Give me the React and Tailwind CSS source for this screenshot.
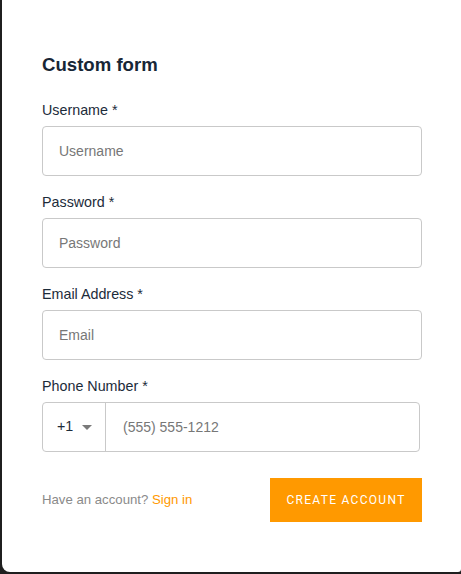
import React from "react";

function Field({ label, placeholder, type = "text" }) {
  return (
    <div className="flex flex-col">
      <label className="text-[14.3px] leading-[20px] text-[#1c2b3a]">{label}</label>
      <input
        type={type}
        placeholder={placeholder}
        className="mt-[6px] h-[50px] w-full rounded-[4px] border border-[#c9c9c9] bg-white px-[16px] text-[14px] text-[#1c2b3a] placeholder:text-[#777777] outline-none"
      />
    </div>
  );
}

export default function App() {
  return (
    <div
      className="h-[574px] w-[461px] bg-[#1f1f1f] pl-[2px] pb-[2px]"
      style={{ fontFamily: '"Liberation Sans", Arial, sans-serif' }}
    >
      <div className="h-[572px] w-[459px] rounded-bl-[8px] rounded-br-[3px] bg-white pl-[40px] pt-[51px]">
        <div className="flex w-[380px] flex-col">
          <h1 className="text-[18.6px] font-bold leading-[28px] text-[#172636]">Custom form</h1>
          <div className="mt-[21px] flex flex-col gap-[16px]">
            <Field label="Username *" placeholder="Username" />
            <Field label="Password *" placeholder="Password" type="password" />
            <Field label="Email Address *" placeholder="Email" />
            <div className="flex flex-col">
              <label className="text-[14.3px] leading-[20px] text-[#1c2b3a]">Phone Number *</label>
              <div className="mt-[6px] flex h-[50px] w-[378px] rounded-[4px] border border-[#c9c9c9]">
                <div className="flex w-[63px] items-center border-r border-[#c9c9c9] pl-[14px]">
                  <span className="text-[14.3px] text-[#1c2b3a]">+1</span>
                  <svg width="10" height="5" viewBox="0 0 10 5" className="ml-[9px] mt-[1px]">
                    <path d="M0 0 L10 0 L5 5 Z" fill="#7a7a7a" />
                  </svg>
                </div>
                <input
                  placeholder="(555) 555-1212"
                  className="min-w-0 flex-1 bg-transparent pl-[17px] text-[14px] text-[#1c2b3a] placeholder:text-[#777777] outline-none"
                />
              </div>
            </div>
          </div>
          <div className="mt-[26px] flex items-center justify-between">
            <p className="text-[13.2px] text-[#8a8a8a]">
              Have an account? <a className="text-[#ff9900]">Sign in</a>
            </p>
            <button
              className="h-[44px] w-[152px] bg-[#ff9900] text-[12px] font-normal tracking-[1.3px] text-white"
              style={{ fontFamily: "Roboto, sans-serif" }}
            >
              CREATE ACCOUNT
            </button>
          </div>
        </div>
      </div>
    </div>
  );
}
